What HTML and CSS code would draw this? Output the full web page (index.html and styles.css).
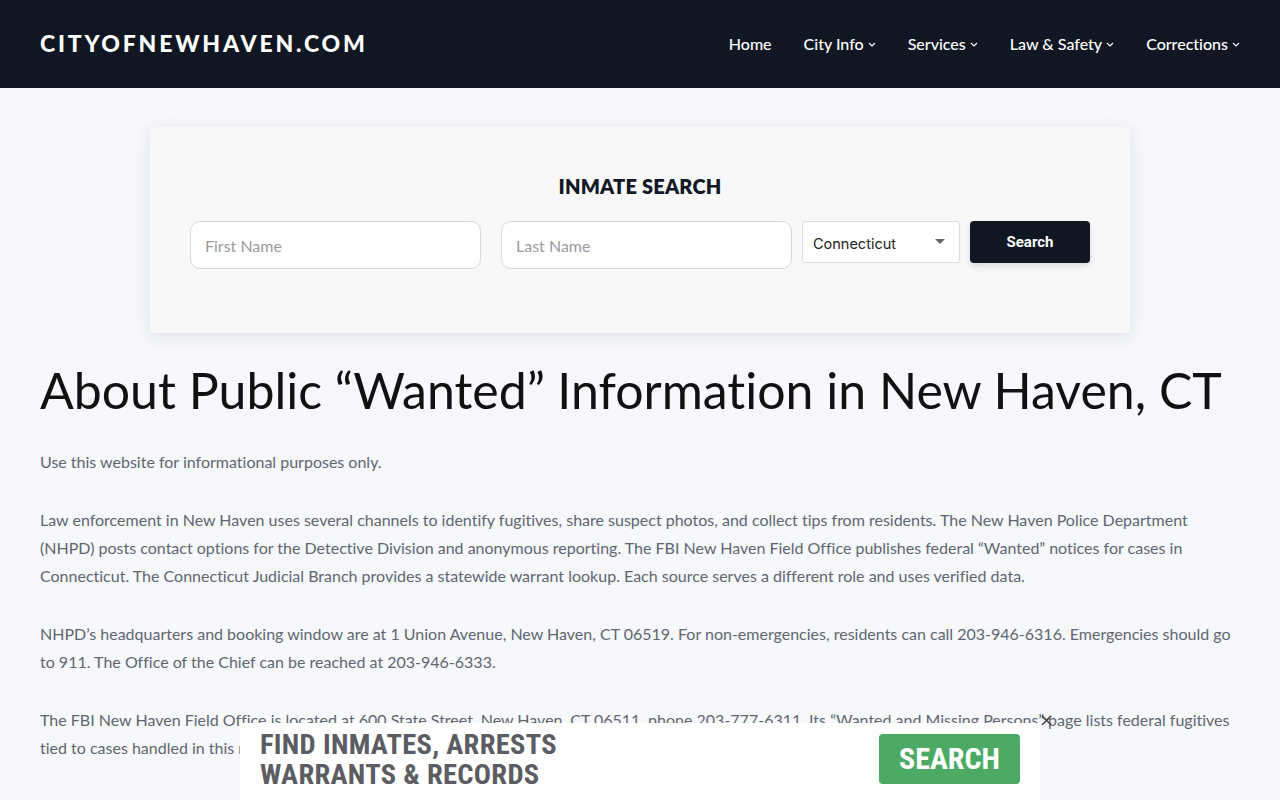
FILE: index.html
```html
<!DOCTYPE html>
<html lang="en">
<head>
<meta charset="utf-8">
<title>City of New Haven</title>
<link rel="stylesheet" href="styles.css">
</head>
<body>
<header class="site-header">
  <a class="logo" href="#">CITYOFNEWHAVEN.COM</a>
  <nav class="nav">
    <a class="nav-item" href="#">Home</a>
    <a class="nav-item" href="#">City Info <svg class="chev" viewBox="0 0 8 5"><path d="M1 1l3 3 3-3" fill="none" stroke="currentColor" stroke-width="1.1"/></svg></a>
    <a class="nav-item" href="#">Services <svg class="chev" viewBox="0 0 8 5"><path d="M1 1l3 3 3-3" fill="none" stroke="currentColor" stroke-width="1.1"/></svg></a>
    <a class="nav-item" href="#">Law &amp; Safety <svg class="chev" viewBox="0 0 8 5"><path d="M1 1l3 3 3-3" fill="none" stroke="currentColor" stroke-width="1.1"/></svg></a>
    <a class="nav-item" href="#">Corrections <svg class="chev" viewBox="0 0 8 5"><path d="M1 1l3 3 3-3" fill="none" stroke="currentColor" stroke-width="1.1"/></svg></a>
  </nav>
</header>

<main class="main">
  <section class="search-card">
    <h2 class="search-title">INMATE SEARCH</h2>
    <form class="search-form">
      <input class="field" type="text" placeholder="First Name">
      <input class="field" type="text" placeholder="Last Name">
      <div class="select-wrap">
        <select class="select"><option>Connecticut</option></select>
      </div>
      <button class="search-btn" type="button">Search</button>
    </form>
  </section>

  <article class="content">
    <h1 class="title">About Public “Wanted” Information in New Haven, CT</h1>
    <p>Use this website for informational purposes only.</p>
    <p>Law enforcement in New Haven uses several channels to identify fugitives, share suspect photos, and collect tips from residents. The New Haven Police Department (NHPD) posts contact options for the Detective Division and anonymous reporting. The FBI New Haven Field Office publishes federal “Wanted” notices for cases in Connecticut. The Connecticut Judicial Branch provides a statewide warrant lookup. Each source serves a different role and uses verified data.</p>
    <p>NHPD’s headquarters and booking window are at 1 Union Avenue, New Haven, CT 06519. For non-emergencies, residents can call 203-946-6316. Emergencies should go to 911. The Office of the Chief can be reached at 203-946-6333.</p>
    <p>The FBI New Haven Field Office is located at 600 State Street, New Haven, CT 06511, phone 203-777-6311. Its “Wanted and Missing Persons” page lists federal fugitives tied to cases handled in this region, with photos, descriptions and reward details where they are offered.</p>
  </article>
</main>

<div class="banner">
  <div class="banner-text">FIND INMATES, ARRESTS<br>WARRANTS &amp; RECORDS</div>
  <a class="banner-btn" href="#">SEARCH</a>
  <span class="banner-close">×</span>
</div>
</body>
</html>
```

FILE: styles.css
```css
* { box-sizing: border-box; }
html, body { margin: 0; padding: 0; }
body {
  background: #f6f8fc;
  font-family: "Lato", "Noto Sans", sans-serif;
  font-variant-ligatures: none;
  color: #5f6670;
  overflow: hidden;
  height: 800px;
}
a { text-decoration: none; color: inherit; }

.site-header {
  height: 88px;
  background: #111722;
  display: flex;
  align-items: center;
  justify-content: space-between;
  padding: 0 40px;
}
.logo {
  color: #fff;
  font-family: "Lato", sans-serif;
  font-weight: 900;
  font-size: 23px;
  letter-spacing: 2.8px;
  margin-top: -2px;
}
.nav { display: flex; gap: 32px; align-items: center; margin-top: -2px; }
.nav-item {
  color: #fff;
  font-size: 16px;
  font-weight: 500;
  display: flex;
  align-items: center;
  gap: 4px;
}
.chev { width: 8px; height: 5px; margin-top: 2px; }

.main { padding: 39px 40px 0; }
.search-card {
  width: 980px;
  margin: 0 auto;
  background: #f8f8f9;
  border-radius: 4px;
  box-shadow: 0 4px 18px rgba(20, 30, 60, 0.10);
  padding: 46px 40px 64px;
}
.search-title {
  margin: 0 0 22px;
  text-align: center;
  font-size: 20px;
  font-weight: 800;
  color: #121826;
  letter-spacing: 0.2px;
  line-height: 26px;
}
.search-form { display: flex; align-items: flex-start; }
.field {
  width: 291px;
  height: 48px;
  border: 1px solid #d9d9dc;
  border-radius: 10px;
  background: #fff;
  padding: 0 14px;
  font-family: "Lato", sans-serif;
  font-size: 16px;
  margin-right: 20px;
  color: #333;
}
.field::placeholder { color: #9b9b9f; }
.select-wrap { position: relative; margin-left: -10px; margin-right: 10px; }
.select-wrap::after {
  content: "";
  position: absolute;
  right: 15px;
  top: 18px;
  border-left: 5px solid transparent;
  border-right: 5px solid transparent;
  border-top: 5px solid #666;
}
.select {
  appearance: none;
  -webkit-appearance: none;
  width: 158px;
  height: 42px;
  border: 1px solid #dcdcdf;
  border-radius: 3px;
  background: #fff;
  padding: 2px 10px 0;
  font-family: "Inter", "Liberation Sans", sans-serif;
  font-size: 14.5px;
  color: #222;
}
.search-btn {
  width: 120px;
  height: 42px;
  border: 0;
  border-radius: 4px;
  background: #111722;
  color: #fff;
  font-family: "Roboto", "Liberation Sans", sans-serif;
  font-weight: 700;
  font-size: 15px;
  box-shadow: 0 3px 6px rgba(0,0,0,0.12);
}

.content { padding-top: 27px; }
.title {
  margin: 0 0 28px;
  font-size: 50px;
  font-weight: 400;
  color: #111;
  line-height: 60px;
}
.content p {
  margin: 0 0 30px;
  font-size: 16px;
  line-height: 28px;
}

.banner {
  position: fixed;
  left: 240px;
  top: 723px;
  width: 800px;
  height: 77px;
  background: #fff;
  display: flex;
  align-items: center;
  justify-content: space-between;
  padding: 0 20px;
}
.banner-text {
  font-family: "Roboto Condensed", "Liberation Sans Narrow", "Roboto", sans-serif;
  font-stretch: condensed;
  font-weight: 700;
  font-size: 28.5px;
  line-height: 30px;
  letter-spacing: 0.3px;
  color: #5c5c63;
  margin-top: -3px;
}
.banner-btn {
  width: 141px;
  height: 50px;
  background: #4caa64;
  border-radius: 4px;
  color: #fff;
  font-family: "Roboto Condensed", "Liberation Sans Narrow", "Roboto", sans-serif;
  font-stretch: condensed;
  font-weight: 700;
  font-size: 30px;
  display: flex;
  align-items: center;
  justify-content: center;
  margin-top: -6px;
}
.banner-close {
  position: absolute;
  right: -14px;
  top: -12px;
  font-family: "DejaVu Sans", sans-serif;
  font-size: 18px;
  line-height: 18px;
  color: #444;
}
```
